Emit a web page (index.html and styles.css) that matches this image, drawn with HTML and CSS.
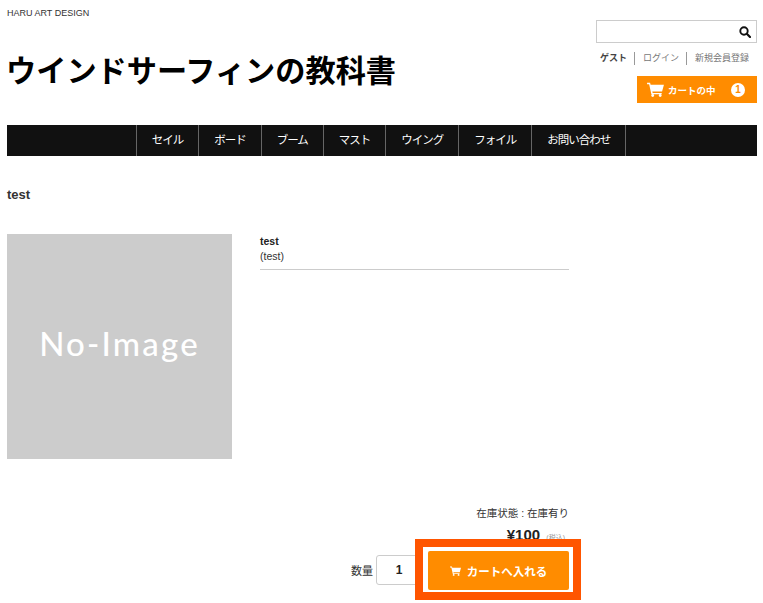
FILE: index.html
```html
<!DOCTYPE html>
<html lang="ja">
<head>
    <meta charset="UTF-8">
    <meta name="viewport" content="width=device-width, initial-scale=1.0">
    <title>ウインドサーフィンの教科書</title>
    <link rel="stylesheet" href="styles.css">
</head>
<body>
    <header class="site-header">
        <div class="brand">
            <p class="tagline">HARU ART DESIGN</p>
            <h1 class="site-title">ウインドサーフィンの教科書</h1>
        </div>
        <div class="header-tools">
            <form class="search">
                <input class="search-input" type="text">
                <svg class="search-icon" viewBox="0 0 12 12" width="12" height="12">
                    <circle cx="5" cy="5" r="3.7" fill="none" stroke="#111" stroke-width="1.9"/>
                    <path d="M7.8 7.8L11 11" stroke="#111" stroke-width="2.2" stroke-linecap="round"/>
                </svg>
            </form>
            <ul class="user-links">
                <li class="guest">ゲスト</li>
                <li>ログイン</li>
                <li>新規会員登録</li>
            </ul>
            <a class="cart-link">
                <svg class="cart-icon" viewBox="0 0 18 16" width="17" height="15">
                    <path d="M0 0.8h3.2l0.6 2H18l-2 7.4H5.6l0.4 1.4h9.6v1.5H4.6L2.2 2.3H0z" fill="#fff"/>
                    <circle cx="6" cy="14.4" r="1.5" fill="#fff"/>
                    <circle cx="14" cy="14.4" r="1.5" fill="#fff"/>
                </svg>
                <span class="cart-label">カートの中</span>
                <span class="cart-count">1</span>
            </a>
        </div>
    </header>

    <nav class="main-nav">
        <ul class="nav-list">
            <li>セイル</li>
            <li>ボード</li>
            <li>ブーム</li>
            <li>マスト</li>
            <li>ウイング</li>
            <li>フォイル</li>
            <li>お問い合わせ</li>
        </ul>
    </nav>

    <main>
        <h2 class="page-title">test</h2>
        <section class="product">
            <div class="no-image">No-Image</div>
            <div class="product-info">
                <p class="product-name">test</p>
                <p class="product-code">(test)</p>
            </div>
        </section>
        <section class="buy">
            <p class="stock">在庫状態 : 在庫有り</p>
            <p class="price">¥100 <small>(税込)</small></p>
            <div class="buy-row">
                <label class="qty-label">数量</label>
                <input class="qty" type="text" value="1">
                <div class="add-frame">
                    <button class="add-button" type="button">
                        <svg viewBox="0 0 18 16" width="11" height="10">
                            <path d="M0 0.8h3.2l0.6 2H18l-2 7.4H5.6l0.4 1.4h9.6v1.5H4.6L2.2 2.3H0z" fill="#fff"/>
                            <circle cx="6" cy="14.4" r="1.5" fill="#fff"/>
                            <circle cx="14" cy="14.4" r="1.5" fill="#fff"/>
                        </svg>
                        カートへ入れる
                    </button>
                </div>
            </div>
        </section>
    </main>
</body>
</html>
```

FILE: styles.css
```css
/* General */
body {
    margin: 0;
    height: 603px;
    overflow: hidden;
    padding: 0 6px 0 7px;
    background-color: #fff;
    color: #333;
    font-family: "Liberation Sans", "Noto Sans CJK JP", sans-serif;
    font-size: 12px;
}

p, h1, h2, ul {
    margin: 0;
    padding: 0;
}

ul {
    list-style: none;
}

/* Header */
.site-header {
    display: flex;
    justify-content: space-between;
    height: 125px;
}

.tagline {
    padding-top: 7px;
    font-size: 9px;
    line-height: 12px;
}

.site-title {
    margin-top: 31px;
    margin-left: -1px;
    color: #000;
    font-size: 30.2px;
    line-height: 44px;
}

.header-tools {
    display: flex;
    flex-direction: column;
    align-items: flex-end;
    padding-top: 20px;
}

.search {
    display: flex;
    align-items: center;
    justify-content: flex-end;
    box-sizing: border-box;
    width: 161px;
    height: 23px;
    padding-right: 5px;
    border: 1px solid #ccc;
}

.search-input {
    flex: 1;
    min-width: 0;
    border: 0;
    outline: 0;
}

.user-links {
    display: flex;
    align-items: center;
    height: 13px;
    margin-top: 9px;
    padding-right: 8px;
    color: #777;
    font-size: 9px;
    line-height: 13px;
}

.user-links li + li {
    margin-left: 7px;
    padding-left: 8px;
    border-left: 1px solid #999;
}

.user-links .guest {
    color: #444;
    font-weight: bold;
}

.cart-link {
    display: flex;
    align-items: center;
    box-sizing: border-box;
    width: 120px;
    height: 27px;
    margin-top: 11px;
    padding: 0 12px 0 10px;
    background-color: #ff8c00;
    color: #fff;
}

.cart-label {
    flex: 1;
    margin-left: 4px;
    font-size: 9.5px;
    font-weight: bold;
}

.cart-count {
    width: 14px;
    height: 14px;
    border-radius: 50%;
    background-color: #fff;
    color: #ff8c00;
    font-size: 10px;
    font-weight: bold;
    line-height: 14px;
    text-align: center;
}

/* Navigation */
.main-nav {
    height: 31px;
    background-color: #111;
}

.nav-list {
    display: flex;
    justify-content: center;
    height: 100%;
    padding-right: 2px;
}

.nav-list li {
    padding: 0 15px;
    border-left: 1px solid #666;
    color: #fff;
    font-size: 11.5px;
    letter-spacing: -1px;
    line-height: 30px;
}

.nav-list li:last-child {
    border-right: 1px solid #666;
}

/* Product */
.page-title {
    margin-top: 31px;
    font-size: 13px;
    line-height: 16px;
}

.product {
    display: flex;
    margin-top: 31px;
}

.no-image {
    display: flex;
    align-items: center;
    justify-content: center;
    box-sizing: border-box;
    width: 225px;
    height: 225px;
    padding-bottom: 8px;
    background-color: #ccc;
    color: #fff;
    font-family: Lato, sans-serif;
    font-size: 33px;
    font-weight: 500;
    letter-spacing: 2.2px;
}

.product-info {
    width: 309px;
    height: 35px;
    margin-left: 28px;
    border-bottom: 1px solid #ccc;
    font-size: 10.5px;
    line-height: 15px;
}

.product-name {
    color: #222;
    font-weight: bold;
}

/* Buy box */
.buy {
    display: flex;
    flex-direction: column;
    align-items: flex-end;
    width: 562px;
    margin-top: 47px;
}

.stock {
    font-size: 10.5px;
    line-height: 15px;
}

.price {
    margin-top: 5px;
    padding-right: 4px;
    color: #222;
    font-size: 15px;
    font-weight: bold;
    line-height: 18px;
}

.price small {
    margin-left: 2px;
    color: #999;
    font-size: 7px;
    font-weight: normal;
}

.buy-row {
    display: flex;
    align-items: center;
    margin-top: -8px;
    margin-right: -12px;
}

.qty-label {
    margin-right: 3px;
    font-size: 11px;
}

.qty {
    box-sizing: border-box;
    width: 46px;
    height: 30px;
    padding: 0;
    border: 1px solid #ccc;
    border-radius: 3px;
    color: #222;
    font-family: inherit;
    font-size: 12px;
    font-weight: bold;
    text-align: center;
}

.add-frame {
    box-sizing: border-box;
    width: 166px;
    height: 61px;
    margin-left: -7px;
    border: 8px solid #ff5500;
    background-color: #fff;
    padding: 4px 4px 2px 5px;
}

.add-button {
    display: flex;
    align-items: center;
    justify-content: center;
    gap: 6px;
    width: 100%;
    height: 100%;
    padding: 0;
    border: 0;
    border-radius: 2px;
    background-color: #ff8c00;
    color: #fff;
    font-family: inherit;
    font-size: 11.5px;
    font-weight: bold;
}
```
